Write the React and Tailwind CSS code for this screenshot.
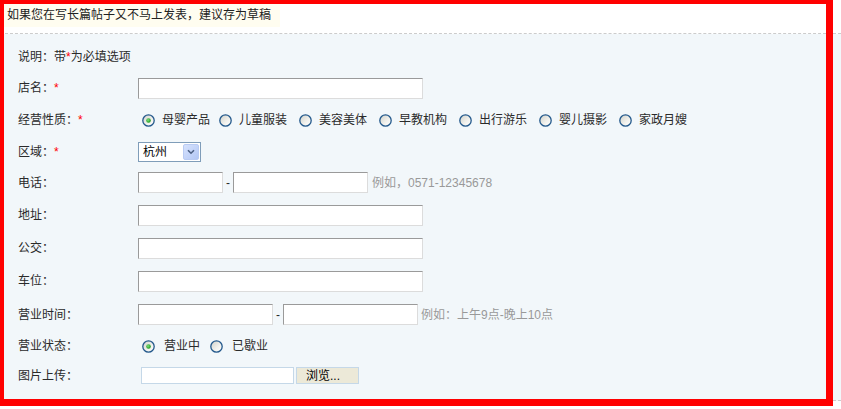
import React from "react";

const Radio = ({ checked }) => (
  <svg width="13" height="13" viewBox="0 0 13 13" className="shrink-0 block">
    <defs>
      <linearGradient id="rgrad" x1="0" y1="0" x2="1" y2="1">
        <stop offset="0" stopColor="#d0d0c8" />
        <stop offset="0.6" stopColor="#f2f2ee" />
        <stop offset="1" stopColor="#ffffff" />
      </linearGradient>
      <radialGradient id="dot" cx="0.4" cy="0.4" r="0.6">
        <stop offset="0" stopColor="#7be07b" />
        <stop offset="1" stopColor="#1f9a1f" />
      </radialGradient>
    </defs>
    <circle cx="6.5" cy="6.5" r="5.7" fill="url(#rgrad)" stroke="#24598c" strokeWidth="1.3" />
    {checked && <circle cx="6.5" cy="6.5" r="2.3" fill="url(#dot)" />}
  </svg>
);

const Star = () => <span className="text-[#ff0000]">*</span>;

const Input = ({ w }) => (
  <div
    className={`h-[21px] bg-white border border-t-[#9a9a9a] border-l-[#9a9a9a] border-b-[#dcdcdc] border-r-[#dcdcdc] ${w}`}
  />
);

const Row = ({ h, label, children }) => (
  <div className={`flex items-center pl-[18px] ${h}`}>
    <div className="w-[120px] shrink-0 whitespace-nowrap">{label}</div>
    <div className="flex items-center">{children}</div>
  </div>
);

export default function App() {
  const kinds = ["母婴产品", "儿童服装", "美容美体", "早教机构", "出行游乐", "婴儿摄影", "家政月嫂"];
  return (
    <div className="relative w-[841px] h-[409px] bg-white overflow-hidden text-[12px] text-[#2a2a2a] font-['Liberation_Sans','Noto_Sans_CJK_SC',sans-serif]">
      <div className="h-[34px] pl-[4px] pt-[4px] border-b border-dashed border-[#cccccc]">
        <div className="w-[276px] h-[23px] bg-[#fffdf0] pl-[3px] leading-[23px] text-[#222] whitespace-nowrap">
          如果您在写长篇帖子又不马上发表，建议存为草稿
        </div>
      </div>
      <div className="h-[367px] bg-[#f2f7fa] border-b border-dashed border-[#cccccc] pt-[7px]">
        <div className="flex items-center pl-[18px] h-[31px]">
          说明：带<Star />为必填选项
        </div>
        <Row h="h-[32px]" label={<>店名：<Star /></>}>
          <Input w="w-[285px]" />
        </Row>
        <Row h="h-[32px]" label={<>经营性质：<Star /></>}>
          <div className="flex items-center pl-[4px]">
            {kinds.map((k, i) => (
              <div key={k} className={`flex items-center ${i === 0 ? "w-[77px]" : "w-[80px]"}`}>
                <Radio checked={i === 0} />
                <span className="ml-[7px] whitespace-nowrap">{k}</span>
              </div>
            ))}
          </div>
        </Row>
        <Row h="h-[31px]" label={<>区域：<Star /></>}>
          <div className="w-[63px] h-[20px] bg-white border border-[#7f9db9] flex items-center justify-between pl-[4px] pr-[1px] text-[#000]">
            <span>杭州</span>
            <div className="w-[16px] h-[16px] rounded-[2px] border border-[#b9cbf3] bg-[linear-gradient(135deg,#d6e2fd,#b3c7f5)] flex items-center justify-center">
              <svg width="8" height="6" viewBox="0 0 8 6">
                <path d="M1 1.2 L4 4.2 L7 1.2" fill="none" stroke="#4d6185" strokeWidth="1.6" />
              </svg>
            </div>
          </div>
        </Row>
        <Row h="h-[31px]" label="电话：">
          <Input w="w-[85px]" />
          <span className="w-[10px] text-center">-</span>
          <Input w="w-[135px]" />
          <span className="ml-[4px] text-[#999] whitespace-nowrap">例如，0571-12345678</span>
        </Row>
        <Row h="h-[34px]" label="地址：">
          <Input w="w-[285px]" />
        </Row>
        <Row h="h-[32px]" label="公交：">
          <Input w="w-[285px]" />
        </Row>
        <Row h="h-[34px]" label="车位：">
          <Input w="w-[285px]" />
        </Row>
        <Row h="h-[33px]" label="营业时间：">
          <Input w="w-[135px]" />
          <span className="w-[10px] text-center">-</span>
          <Input w="w-[135px]" />
          <span className="ml-[3px] text-[#999] whitespace-nowrap">例如：上午9点-晚上10点</span>
        </Row>
        <Row h="h-[30px]" label="营业状态：">
          <div className="flex items-center pl-[4px]">
            <Radio checked />
            <span className="ml-[9px]">营业中</span>
            <span className="ml-[10px]"><Radio /></span>
            <span className="ml-[9px]">已歇业</span>
          </div>
        </Row>
        <Row h="h-[29px]" label="图片上传：">
          <div className="ml-[3px] w-[153px] h-[17px] bg-white border border-[#c5d8e8]" />
          <div className="ml-[2px] w-[63px] h-[17px] bg-[#ece9d8] border border-[#c5d8e8] flex items-center pl-[9px] text-[#000] leading-none">
            浏览...
          </div>
        </Row>
      </div>
      <div className="absolute left-0 top-0 w-[833px] h-[406px] border-t-[4px] border-l-[4px] border-r-[7px] border-b-[7px] border-[#ff0000] pointer-events-none" />
    </div>
  );
}
